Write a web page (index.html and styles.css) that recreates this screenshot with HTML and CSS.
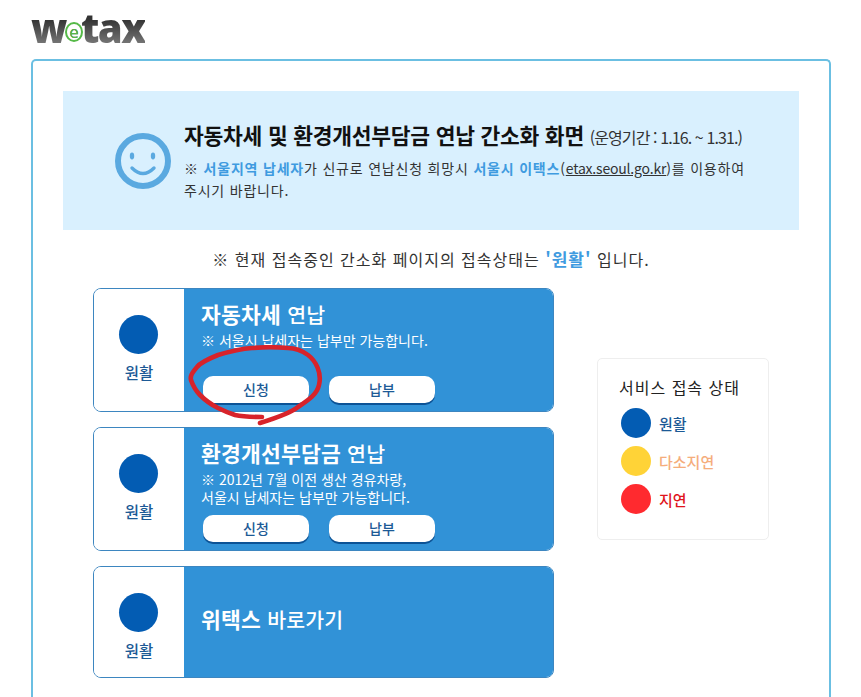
FILE: index.html
```html
<!DOCTYPE html>
<html lang="ko">
<head>
    <meta charset="UTF-8">
    <title>위택스 연납 간소화</title>
    <link rel="stylesheet" href="styles.css">
</head>
<body>
    <header class="top">
        <div class="logo">w<span class="logo-e">e</span>tax</div>
    </header>

    <div class="frame">
        <!-- Notice -->
        <div class="notice">
            <svg class="smile" width="56" height="56" viewBox="0 0 56 56">
                <circle cx="28" cy="28" r="25" fill="none" stroke="#5aa9e0" stroke-width="6"/>
                <ellipse cx="17" cy="23" rx="2.2" ry="3.4" fill="#5aa9e0"/>
                <ellipse cx="38" cy="23" rx="2.2" ry="3.4" fill="#5aa9e0"/>
                <path d="M17 35 Q28 46 39 35" fill="none" stroke="#5aa9e0" stroke-width="3.4" stroke-linecap="round"/>
            </svg>
            <div class="notice-text">
                <h1>자동차세 및 환경개선부담금 연납 간소화 화면 <small>(운영기간 : 1.16. ~ 1.31.)</small></h1>
                <p>※ <b>서울지역 납세자</b>가 신규로 연납신청 희망시 <b>서울시 이택스</b>(<u>etax.seoul.go.kr</u>)를 이용하여<br>주시기 바랍니다.</p>
            </div>
        </div>

        <p class="status-line">※ 현재 접속중인 간소화 페이지의 접속상태는 <b>'원활'</b> 입니다.</p>

        <div class="content">
            <div class="cards">
                <div class="card">
                    <div class="card-state"><span class="dot"></span><span class="state-name">원활</span></div>
                    <div class="card-body">
                        <h2>자동차세 <span>연납</span></h2>
                        <p>※ 서울시 납세자는 납부만 가능합니다.</p>
                        <div class="btns btns-low">
                            <a class="btn">신청</a>
                            <a class="btn">납부</a>
                        </div>
                    </div>
                </div>

                <div class="card">
                    <div class="card-state"><span class="dot"></span><span class="state-name">원활</span></div>
                    <div class="card-body">
                        <h2>환경개선부담금 <span>연납</span></h2>
                        <p>※ 2012년 7월 이전 생산 경유차량,<br>서울시 납세자는 납부만 가능합니다.</p>
                        <div class="btns">
                            <a class="btn">신청</a>
                            <a class="btn">납부</a>
                        </div>
                    </div>
                </div>

                <div class="card card-short">
                    <div class="card-state"><span class="dot"></span><span class="state-name">원활</span></div>
                    <div class="card-body card-link">
                        <h2>위택스 <span>바로가기</span></h2>
                    </div>
                </div>
            </div>

            <aside class="legend">
                <h3>서비스 접속 상태</h3>
                <div class="legend-row"><span class="legend-dot blue"></span><span class="t-blue">원활</span></div>
                <div class="legend-row"><span class="legend-dot yellow"></span><span class="t-orange">다소지연</span></div>
                <div class="legend-row"><span class="legend-dot red"></span><span class="t-red">지연</span></div>
            </aside>
        </div>
    </div>

    <!-- hand drawn marker over the first button -->
    <svg class="scribble" width="140" height="84" viewBox="0 0 140 84">
        <path d="M74 78 C90 73 105 68 112 62 C124 54 131 49 133 40 C136 28 130 16 122 10 C115 5 110 3 102 3 C90 2 78 2 66 3 C52 4 42 7 32 10 C22 14 14 18 11 22 C6 28 4 31 5 35 C7 41 10 46 14 50 C20 56 26 60 32 63 C38 66 43 68 49 70 C58 72 68 72 76 72" fill="none" stroke="#d8232a" stroke-width="4.6" stroke-linecap="round" stroke-linejoin="round"/>
    </svg>
</body>
</html>
```

FILE: styles.css
```css
* {
    margin: 0;
    padding: 0;
    box-sizing: border-box;
    font-family: "Noto Sans CJK KR", "Noto Sans", sans-serif;
}

body {
    position: relative;
    height: 697px;
    overflow: hidden;
    background: #fff;
    color: #222;
}

.top {
    height: 59px;
    padding-left: 31px;
}

.logo {
    display: inline-block;
    font-family: "Open Sans", sans-serif;
    font-size: 40px;
    font-weight: 800;
    line-height: 55px;
    letter-spacing: -1.5px;
    background: linear-gradient(180deg, #333 35%, #777 80%);
    -webkit-background-clip: text;
    background-clip: text;
    color: transparent;
}

.logo-e {
    display: inline-block;
    width: 18px;
    height: 20px;
    margin: 0 -2px 0 -1px;
    border: 2px solid #55b947;
    border-radius: 50%;
    font-family: "Open Sans", sans-serif;
    font-size: 17px;
    font-weight: 400;
    line-height: 15px;
    letter-spacing: 0;
    text-align: center;
    vertical-align: 5px;
    color: #55b947;
}

.frame {
    width: 800px;
    height: 638px;
    margin-left: 31px;
    padding: 30px 30px 0;
    border: 2px solid #6bbfe2;
    border-bottom: 0;
    border-radius: 5px 5px 0 0;
}

.notice {
    display: flex;
    align-items: center;
    gap: 13px;
    height: 139px;
    padding: 0 0 0 52px;
    background: #d9f0fe;
}

.smile {
    flex: none;
}

.notice-text h1 {
    font-size: 21.5px;
    font-weight: 700;
    line-height: 30px;
    letter-spacing: -0.25px;
    color: #111;
    margin-bottom: 5px;
    white-space: nowrap;
}

.notice-text small {
    font-size: 16px;
    font-weight: 400;
    letter-spacing: -0.9px;
    color: #333;
}

.notice-text p {
    font-size: 14px;
    line-height: 22px;
    letter-spacing: 0.8px;
    color: #333;
    width: 600px;
}

.notice-text u {
    letter-spacing: -0.2px;
}

.notice-text b {
    color: #3f9be0;
    font-weight: 700;
}

.status-line {
    margin-top: 17px;
    height: 41px;
    font-size: 16px;
    line-height: 24px;
    letter-spacing: 1px;
    text-align: center;
    color: #333;
}

.status-line b {
    font-size: 17px;
    color: #3f9be0;
}

.content {
    display: flex;
    align-items: flex-start;
    gap: 43px;
    padding-left: 30px;
}

.cards {
    display: flex;
    flex-direction: column;
    gap: 15px;
    width: 461px;
}

.card {
    display: flex;
    height: 124px;
    border: 1px solid #3d86c0;
    border-radius: 8px;
    overflow: hidden;
}

.card-short {
    height: 112px;
}

.card-state {
    flex: none;
    display: flex;
    flex-direction: column;
    align-items: center;
    width: 90px;
    padding-top: 26px;
    background: #fff;
}

.dot {
    width: 39px;
    height: 39px;
    margin-right: 1px;
    border-radius: 50%;
    background: #035cb3;
}

.state-name {
    margin-top: 6px;
    font-size: 15.5px;
    font-weight: 500;
    line-height: 24px;
    color: #1c5a96;
}

.card-body {
    flex: 1;
    padding: 10px 0 0 17px;
    background: #3192d7;
    color: #fff;
}

.card-body h2 {
    font-size: 21.5px;
    font-weight: 700;
    line-height: 30px;
    letter-spacing: 0.2px;
}

.card-body h2 span {
    font-size: 20.5px;
    font-weight: 500;
}

.card-body p {
    margin-top: 2px;
    font-size: 14px;
    line-height: 18px;
}

.card-link {
    display: flex;
    align-items: center;
    padding: 0 0 6px 17px;
}

.btns {
    display: flex;
    gap: 20px;
    margin: 9px 0 0 2px;
}

.btns-low {
    margin-top: 27px;
}

.btn {
    width: 106px;
    height: 27px;
    border-radius: 10px;
    background: #fff;
    box-shadow: 0 2px 0 #0c5396;
    font-size: 14px;
    font-weight: 500;
    line-height: 26px;
    text-align: center;
    color: #1c5a96;
}

.legend {
    width: 172px;
    height: 182px;
    margin-top: 70px;
    padding: 16px 21px;
    border: 1px solid #eeeeee;
    border-radius: 5px;
}

.legend h3 {
    font-size: 16px;
    font-weight: 400;
    line-height: 24px;
    letter-spacing: 1px;
    color: #222;
    margin-bottom: 5px;
    white-space: nowrap;
}

.legend-row {
    display: flex;
    align-items: center;
    gap: 8px;
    height: 38px;
    padding-left: 2px;
    font-size: 15px;
    font-weight: 500;
}

.legend-dot {
    width: 30px;
    height: 30px;
    border-radius: 50%;
}

.blue { background: #035cb3; }
.yellow { background: #ffd337; }
.red { background: #ff2a2f; }

.t-blue { color: #1c5a96; }
.t-orange { color: #f5ad7c; }
.t-red { color: #e0141c; }

.scribble {
    position: absolute;
    left: 186px;
    top: 345px;
}
```
